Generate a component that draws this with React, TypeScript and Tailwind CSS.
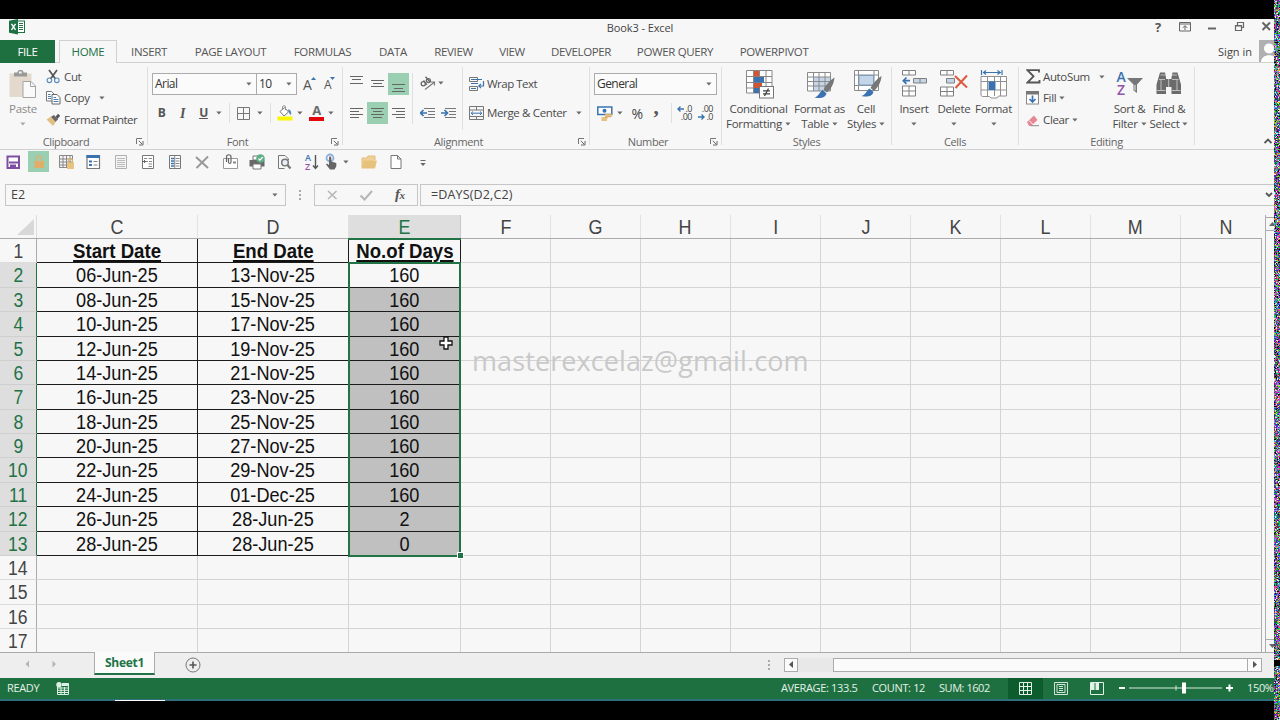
import type { ReactNode } from "react";
import clsx from "clsx";

const BLUE = "#3b73b0";

const Arrow = ({ className, light }: { className?: string; light?: boolean }) => (
  <svg width="6" height="4" viewBox="0 0 6 4" className={clsx("shrink-0", className)}>
    <path d="M0.3 0.4h5.2L2.9 3.4z" fill={light ? "#aaa" : "#6a6a6a"} />
  </svg>
);

const Launcher = () => (
  <svg width="8" height="8" viewBox="0 0 8 8" className="shrink-0">
    <path d="M0.5 6V0.5H6" fill="none" stroke="#777" />
    <path d="M2.8 2.8L6 6M7 3v4H3" fill="none" stroke="#666" />
  </svg>
);

const Sep = ({ className }: { className?: string }) => (
  <div className={clsx("w-px shrink-0 bg-[#e0e0e0]", className)} />
);

/* ---------- clipboard ---------- */

const PasteIcon = () => (
  <svg width="28" height="30" viewBox="0 0 28 30" className="shrink-0">
    <rect x="0.5" y="3.5" width="22" height="23.5" fill="#e3d9cd" />
    <path d="M5 2.500h3.500c0-3.500 6-3.500 6 0H18v4H5z" fill="#999" />
    <rect x="10" y="1.500" width="2.6" height="2" fill="#f7f7f7" />
    <path d="M14 11.500h8l4.5 4.500V27.500H14z" fill="#fafafa" stroke="#a3a3a3" />
    <path d="M21.500 11.500v5h5" fill="none" stroke="#a3a3a3" />
  </svg>
);

const CutIcon = () => (
  <svg width="15" height="15" viewBox="0 0 15 15" className="shrink-0">
    <path d="M3 1l6.500 9M11 1L4.500 10" stroke="#555" strokeWidth="1.7" fill="none" />
    <circle cx="3.400" cy="11.300" r="2.300" fill="none" stroke="#5b8dbb" strokeWidth="1.100" />
    <circle cx="10.800" cy="11.300" r="2.300" fill="none" stroke="#5b8dbb" strokeWidth="1.100" />
  </svg>
);

const CopyIcon = () => (
  <svg width="15" height="14" viewBox="0 0 15 14" className="shrink-0">
    <path d="M0.500 0.500h5l2.500 2.500v7H0.500z" fill="#fff" stroke="#777" />
    <path d="M2 3.500h2.500M2 5.500h3M2 7.500h3" stroke={BLUE} strokeWidth="0.900" />
    <path d="M6 3.500h5l3 3v6.500H6z" fill="#fff" stroke="#666" />
    <path d="M7.500 6.500h2.500M7.500 8.500h5M7.500 10.500h5" stroke={BLUE} strokeWidth="0.900" />
  </svg>
);

const PainterIcon = () => (
  <svg width="15" height="14" viewBox="0 0 15 14" className="shrink-0">
    <path d="M0.500 6.500L5 3.500l5 5-3 4.500z" fill="#e3bf85" />
    <path d="M5 3.800l3-1.800 4 4.500-2.500 2.300z" fill="#666" />
    <path d="M9.500 3.800L12 0.800l2.200 2-2.700 3.200z" fill="#555" />
  </svg>
);

/* ---------- font ---------- */

const GrowFont = ({ down }: { down?: boolean }) => (
  <div className="flex h-5 w-[14px] shrink-0 items-end">
    <span className={clsx("leading-[18px] text-[#555]", down ? "text-[12px]" : "text-[14px]")}>A</span>
    <svg width="5" height="3" viewBox="0 0 5 3" className="-ml-px mb-[14px] shrink-0">
      <path d={down ? "M0 0h5L2.500 3z" : "M0 3h5L2.500 0z"} fill={BLUE} />
    </svg>
  </div>
);

const BordersIcon = () => (
  <svg width="13" height="13" viewBox="0 0 13 13" className="shrink-0">
    <path d="M0.500 0.500h12v12H0.500zM6.500 0.500v12M0.500 6.500h12" fill="none" stroke="#777" />
  </svg>
);

const FillIcon = () => (
  <svg width="16" height="16" viewBox="0 0 16 16" className="shrink-0">
    <path d="M3 6.500L7.500 2.500l4 4.500-4.500 4z" fill="#fff" stroke="#777" />
    <path d="M5.500 5V2.200c0-2 3-2 3 0V5" fill="none" stroke="#888" />
    <path d="M11 4.500c3 0 3.500 2.500 3 5.500-1.500-1-2.500-2.500-3-5.500z" fill="#5b84b5" />
    <rect x="0.500" y="11.500" width="15" height="4" fill="#fbf507" />
  </svg>
);

const FontColorIcon = () => (
  <div className="flex h-[18px] w-[15px] shrink-0 flex-col items-center">
    <span className="text-[13px] font-bold leading-[13px] text-[#6a6a6a]">A</span>
    <div className="h-1 w-[15px] bg-[#e3060c]" />
  </div>
);

/* ---------- alignment ---------- */

const Lines = ({ rows }: { rows: number[][] }) => (
  <svg width="14" height="14" viewBox="0 0 14 14" className="shrink-0">
    {rows.map(([x, y, w]) => (
      <rect key={y} x={x} y={y} width={w} height="1" fill="#666" />
    ))}
  </svg>
);

const OrientIcon = () => (
  <svg width="16" height="15" viewBox="0 0 16 15" className="shrink-0">
    <circle cx="3.300" cy="7.800" r="2.100" fill="none" stroke="#666" strokeWidth="1.300" />
    <path d="M3.500 4.500L7 8.800M5.500 0.800l4.800 5.500" stroke="#666" strokeWidth="1.300" />
    <circle cx="8.400" cy="4.600" r="2" fill="none" stroke="#666" strokeWidth="1.300" />
    <path d="M5 13.500L14 6.500M14.500 9.500V6h-3.500" fill="none" stroke="#777" strokeWidth="1.100" />
  </svg>
);

const IndentIcon = ({ right }: { right?: boolean }) => (
  <svg width="15" height="12" viewBox="0 0 15 12" className="shrink-0">
    <path d="M4 1.500h11M8 4.500h7M8 7.500h7M4 10.500h11" stroke="#777" />
    <path d={right ? "M0 6h6M3.500 3l3 3-3 3" : "M1 6h6M3.500 3l-3 3 3 3"} fill="none" stroke={BLUE} strokeWidth="1.700" />
  </svg>
);

const WrapIcon = () => (
  <svg width="16" height="15" viewBox="0 0 16 15" className="shrink-0">
    <path d="M0.500 0.500h8v4h-8zM0.500 9.500h8v4h-8z" fill="none" stroke="#777" />
    <path d="M2 2.500h11M2 6.500h7M2 11.500h5" stroke={BLUE} />
    <path d="M14.500 4v5H10M12 6.800L9.800 9l2.200 2.200" fill="none" stroke={BLUE} strokeWidth="1.200" />
  </svg>
);

const MergeIcon = () => (
  <svg width="16" height="15" viewBox="0 0 16 15" className="shrink-0">
    <path d="M0.500 0.500h14v13h-14zM0.500 4h14M0.500 10.500h14M7.500 0.500V4M7.500 10.500v3" fill="none" stroke="#777" />
    <path d="M2 7.200h11M4 5.500L2.200 7.200 4 9M11 5.500l1.800 1.700L11 9" fill="none" stroke={BLUE} />
  </svg>
);

/* ---------- number ---------- */

const MoneyIcon = () => (
  <svg width="16" height="15" viewBox="0 0 16 15" className="shrink-0">
    <rect x="0.800" y="1" width="14" height="7.500" fill="#fff" stroke={BLUE} strokeWidth="1.500" />
    <circle cx="7.500" cy="4.700" r="2" fill={BLUE} />
    <path d="M8 8.500h7M8 10.500h6.500M4.500 12h6M4.500 14h5.500" stroke="#e0b060" strokeWidth="1.500" />
  </svg>
);

const Decimal = ({ inc }: { inc?: boolean }) => (
  <div className="flex w-[15px] shrink-0 flex-col font-['Open_Sans',sans-serif] text-[9px] leading-[8px] tracking-[-0.5px] text-[#444]">
    <div className="flex h-2 items-center justify-end gap-px">
      {inc && (
        <svg width="7" height="6" viewBox="0 0 7 6"><path d="M1 3h6M3.500 0.500L1 3l2.500 2.500" fill="none" stroke={BLUE} strokeWidth="1.400" /></svg>
      )}
      <span>{inc ? ".0" : ".00"}</span>
    </div>
    <div className="flex h-2 items-center justify-end gap-px">
      {!inc && (
        <svg width="7" height="6" viewBox="0 0 7 6"><path d="M0 3h6M3.500 0.500L6 3 3.500 5.500" fill="none" stroke={BLUE} strokeWidth="1.400" /></svg>
      )}
      <span>{inc ? ".00" : ".0"}</span>
    </div>
  </div>
);

/* ---------- styles ---------- */

const CondIcon = () => (
  <svg width="29" height="30" viewBox="0 0 29 30" className="ml-[3px] shrink-0">
    <path d="M0.500 0.500h25.500v22.500h-25.500zM0.500 6.500h25.500M0.500 12.500h25.500M0.500 18h25.500M7.500 0.500v22.500M13.500 0.500v22.500M20 0.500v22.500" fill="#fff" stroke="#888" />
    <rect x="8" y="1" width="5" height="5.500" fill="#d5532f" />
    <rect x="8" y="7" width="10" height="5.500" fill={BLUE} />
    <rect x="8" y="13" width="8" height="5" fill="#d5532f" />
    <rect x="8" y="18" width="5" height="5" fill={BLUE} />
    <rect x="13.500" y="16.500" width="14" height="11.500" fill="#fff" stroke="#777" />
    <path d="M17 20.800h7M17 23.800h7M22.500 18.500l-4 7.500" stroke="#444" strokeWidth="1.300" />
  </svg>
);

const Brush = () => (
  <>
    <path d="M27.500 6.500c-5 3-9 8-11 12l3.500 3c4-3.500 7-9 7.500-15z" fill="#777" />
    <path d="M15.500 19l4 3.500c-1 4-6 5.500-12 4 4-1 5-5.500 8-7.500z" fill={BLUE} />
  </>
);

const TableIcon = () => (
  <svg width="28" height="30" viewBox="0 0 28 30" className="ml-[2px] shrink-0">
    <rect x="0.500" y="2.500" width="23" height="18" fill="#fff" />
    <rect x="6" y="7" width="17.500" height="14" fill="#c5d5e8" />
    <path d="M0.500 2.500h23v18.500h-23zM0.500 7h23M0.500 11.500h23M0.500 16h23M6.500 2.500V21M12 2.500V21M18 2.500V21" fill="none" stroke="#8a8a8a" />
    <g transform="translate(0 1)">
      <Brush />
    </g>
  </svg>
);

const CellStylesIcon = () => (
  <svg width="28" height="30" viewBox="0 0 28 30" className="ml-[4px] shrink-0">
    <path d="M0.500 0.500h24v20h-24zM0.500 5h24M0.500 15.500h24M4.500 0.500v20M20 0.500v20" fill="#fff" stroke="#8a8a8a" />
    <rect x="5" y="5.500" width="14.500" height="9.500" fill="#c5d5e8" stroke="#7f9fc2" />
    <g transform="translate(0 -0.500)">
      <Brush />
    </g>
  </svg>
);

/* ---------- cells ---------- */

const InsertIcon = () => (
  <svg width="27" height="30" viewBox="0 0 27 30" className="shrink-0">
    <path d="M1.500 0.500h13v4.500h-13zM8 0.500V5M1.500 16h13v10h-13zM1.500 21h13M8 16v10" fill="#fff" stroke="#808080" />
    <path d="M12.500 8.500h13v4.500h-13zM19 8.500V13" fill="#c5d5e8" stroke="#808080" />
    <path d="M2.500 10.700H9M5.500 7.500L2.300 10.700l3.200 3.200" fill="none" stroke={BLUE} strokeWidth="1.700" />
  </svg>
);

const DeleteIcon = () => (
  <svg width="28" height="30" viewBox="0 0 28 30" className="shrink-0">
    <path d="M0.500 0.500h13v4.500h-13zM7 0.500V5M0.500 17h13v9h-13zM0.500 21.500h13M7 17v9" fill="#fff" stroke="#808080" />
    <path d="M6.500 8.500h8V13h-8z" fill="#c5d5e8" stroke="#808080" />
    <path d="M15 6l12 11.500M27 5.500L15.500 18" stroke="#dd5a3c" strokeWidth="2" />
  </svg>
);

const FormatIcon = () => (
  <svg width="28" height="30" viewBox="0 0 28 30" className="shrink-0">
    <path d="M1.500 0v5M22 0v5M3 2.500h18M6 0.500l-2.500 2L6 4.500M17.500 0.500l2.500 2-2.500 2" fill="none" stroke={BLUE} strokeWidth="1.200" />
    <path d="M1 6.500h25.500v19.500H18.500l-1.500 2h-6l-1.500-1.500h-7l-1.500-1zM1 11.500h25.500M1 20h25.500M7.500 6.500v19.500M14.500 6.500v5M14.500 20v6M20.500 6.500v19.500" fill="#fff" stroke="#909090" />
    <rect x="8.500" y="11.500" width="7" height="8.500" fill={BLUE} />
  </svg>
);

/* ---------- editing ---------- */

const SumIcon = () => (
  <svg width="15" height="15" viewBox="0 0 15 15" className="shrink-0">
    <path d="M13 3.500V1.200H1.500L7.500 7.300 1.500 13.500H13.500V11" fill="none" stroke="#555" strokeWidth="1.800" />
  </svg>
);

const FillDownIcon = () => (
  <svg width="14" height="14" viewBox="0 0 14 14" className="shrink-0">
    <rect x="0.500" y="0.500" width="12" height="12.500" fill="#fff" stroke="#888" />
    <rect x="0" y="0" width="13" height="3.500" fill="#777" />
    <path d="M6.500 4.500v6.500M3.500 8l3 3 3-3" fill="none" stroke={BLUE} strokeWidth="1.700" />
  </svg>
);

const EraserIcon = () => (
  <svg width="14" height="13" viewBox="0 0 14 13" className="shrink-0">
    <path d="M1 8l7-6.500 3.500 4.500-6.500 6H3z" fill="#e58794" />
    <path d="M3 6.500l4 4" stroke="#f7f7f7" />
    <path d="M5 11.700h8" stroke="#888" />
  </svg>
);

const SortIcon = () => (
  <div className="flex h-[30px] w-[28px] shrink-0">
    <div className="flex w-[11px] flex-col text-center text-[14px] font-semibold leading-[13px]">
      <span className="text-[#3b73b0]">A</span>
      <span className="text-[#9055a8]">Z</span>
    </div>
    <svg width="17" height="30" viewBox="0 0 17 30" className="shrink-0">
      <path d="M0 8h16L10 14.500V23L6.500 20.500V14.500z" fill="#777" />
      <path d="M8 15v5.500" stroke="#eee" />
    </svg>
  </div>
);

const FindIcon = () => (
  <svg width="26" height="30" viewBox="0 0 26 30" className="shrink-0">
    <path d="M4 2.500h5l1 5v16.500H0.500V14.500zM21.500 2.500h-5l-1 5v16.500H25V14.500z" fill="#6b6b6b" />
    <rect x="9" y="9" width="7.500" height="8" fill="#6b6b6b" />
    <path d="M4.500 5h5M16 5h5M3 9.500h6M16 9.500h6.500M1 20.500h8.500M16 20.500h8.500M12.700 9v8M5 10v10M21 10v10" stroke="#c8c8c8" strokeWidth="0.900" />
  </svg>
);

/* ---------- ribbon building blocks ---------- */

interface GroupProps {
  label: string;
  className: string;
  launcher?: boolean;
  children: ReactNode;
}

const Group = ({ label, className, launcher, children }: GroupProps) => (
  <div className={clsx("flex h-[86px] shrink-0", className)}>
    <div className="flex min-w-0 flex-1 flex-col">
      <div className="flex h-[71px]">{children}</div>
      <div className="flex h-[15px] items-center">
        <div className="flex-1 text-center text-[11px] leading-[15px] text-[#666]">{label}</div>
        {launcher && (
          <div className="w-[15px] shrink-0 pl-1">
            <Launcher />
          </div>
        )}
      </div>
    </div>
    <Sep className="my-1" />
  </div>
);

interface BigButtonProps {
  icon: ReactNode;
  lines: string[];
  className: string;
  muted?: boolean;
}

const BigButton = ({ icon, lines, className, muted }: BigButtonProps) => (
  <div
    className={clsx(
      "flex shrink-0 flex-col items-center whitespace-nowrap pt-[7px] text-[11.5px] leading-[15px] tracking-[-0.3px]",
      muted ? "text-[#8c8c8c]" : "text-[#4a4a4a]",
      className
    )}
  >
    {icon}
    <div className="mt-px flex h-[15px] justify-center">{lines[0]}</div>
    <div className="flex h-[15px] items-center justify-center">
      {lines[1] && <span className="mr-[3px]">{lines[1]}</span>}
      <Arrow light={muted} />
    </div>
  </div>
);

const Combo = ({ text, className }: { text: string; className: string }) => (
  <div className={clsx("flex h-[22px] shrink-0 items-center border border-[#ababab] bg-[#fbfbfb] pl-[2px] text-[12px] tracking-[-0.55px] text-[#333]", className)}>
    <span className="flex-1">{text}</span>
    <Arrow className="mr-1" />
  </div>
);

const tabs = [
  { name: "INSERT", w: "w-[64px]" },
  { name: "PAGE LAYOUT", w: "w-[99px]" },
  { name: "FORMULAS", w: "w-[85px]" },
  { name: "DATA", w: "w-[56px]" },
  { name: "REVIEW", w: "w-[65px]" },
  { name: "VIEW", w: "w-[52px]" },
  { name: "DEVELOPER", w: "w-[86px]" },
  { name: "POWER QUERY", w: "w-[102px]" },
  { name: "POWERPIVOT", w: "w-[96px]" },
];

const TitleBar = () => (
  <div className="flex h-[21px] shrink-0 items-start">
    <svg width="16" height="16" viewBox="0 0 16 16" className="ml-[9px] shrink-0">
      <rect x="8" y="2" width="7.500" height="11.500" fill="#fff" stroke="#217346" />
      <path d="M10 4.500h4M10 6.500h4M10 8.500h4M10 10.500h4" stroke="#217346" />
      <path d="M0 1.700L9 0v15.500L0 13.800z" fill="#1e7145" />
      <path d="M2.500 4.800l4 6M6.500 4.800l-4 6" stroke="#fff" strokeWidth="1.400" />
    </svg>
    <div className="w-[1128px] pl-[102px] pt-px text-center text-[11px] leading-4 tracking-[-0.1px] text-[#444]">
      <span className="ml-[7px]">Book3 - Excel</span>
    </div>
    <span className="w-[12px] shrink-0 text-center text-[13px] font-bold leading-4 text-[#555] ml-[-1px] translate-x-[7px]">?</span>
    <svg width="102" height="16" viewBox="0 0 102 16" className="ml-[21px] shrink-0" fill="none" stroke="#666">
      <path d="M1.500 3.500h11v8.500h-11zM1.500 5h11M7 11V7M4.800 8.800L7 6.600l2.200 2.200" />
      <path d="M30 9.500h8" strokeWidth="2" />
      <path d="M57.500 6.500h6v5h-6zM59.500 6V3.500h6v5H64M57.500 7h6" strokeWidth="1.200" />
      <path d="M84.500 3.500l7.500 7.500M92 3.500L84.500 11" strokeWidth="2" />
    </svg>
  </div>
);

const TabBar = () => (
  <div className="flex h-[23px] shrink-0 text-[11.500px] leading-[23px] tracking-[-0.35px] text-[#555]">
    <div className="w-[55px] shrink-0 bg-[#1f7040] text-center text-white">FILE</div>
    <div className="w-1 border-b border-[#d0d0d0]" />
    <div className="w-[58px] shrink-0 border border-b-0 border-[#d0d0d0] text-center leading-[21px] text-[#217346]">HOME</div>
    <div className="flex flex-1 items-center border-b border-[#d0d0d0]">
      {tabs.map((t) => (
        <div key={t.name} className={clsx("shrink-0 whitespace-nowrap text-center", t.w)}>
          {t.name}
        </div>
      ))}
      <div className="flex-1" />
      <span className="text-[11px] tracking-[0px] text-[#444]">Sign in</span>
      <svg width="21" height="22" viewBox="0 0 21 22" className="ml-[7px] shrink-0">
        <rect width="21" height="22" fill="#b0b0b0" />
        <circle cx="10" cy="8.500" r="5" fill="#fff" />
        <path d="M2 22c0-9 16-9 16 0z" fill="#fff" />
      </svg>
    </div>
  </div>
);

const Ribbon = () => (
  <div className="flex h-[87px] shrink-0 border-b border-[#d0d0d0] text-[11.500px] tracking-[-0.35px] text-[#4a4a4a]">
    <Group label="Clipboard" className="w-[148px]" launcher>
      <BigButton muted icon={<PasteIcon />} lines={["Paste"]} className="w-[46px]" />
      <div className="flex flex-col whitespace-nowrap pt-[3px]">
        <div className="flex h-[21px] items-center gap-[3px]"><CutIcon />Cut</div>
        <div className="flex h-[22px] items-center gap-[3px]"><CopyIcon />Copy<Arrow className="ml-[6px]" /></div>
        <div className="flex h-[22px] items-center gap-[3px] tracking-[-0.5px]"><PainterIcon />Format Painter</div>
      </div>
    </Group>

    <Group label="Font" className="w-[195px]" launcher>
      <div className="flex flex-col pl-1 pt-[10px]">
        <div className="flex h-[22px] items-center">
          <Combo text="Arial" className="w-[105px]" />
          <Combo text="10" className="-ml-px w-[41px]" />
          <div className="ml-[6px] flex gap-[7px]">
            <GrowFont />
            <GrowFont down />
          </div>
        </div>
        <div className="mt-[8px] flex h-[20px] items-center text-[12px] text-[#555]">
          <span className="ml-[1px] w-[17px] text-center font-bold">B</span>
          <span className="ml-1 w-[17px] text-center font-['Liberation_Serif',serif] text-[14px] font-bold italic">I</span>
          <span className="ml-1 w-[17px] text-center font-bold underline">U</span>
          <Arrow className="ml-[4px]" />
          <Sep className="ml-[7px] h-5" />
          <div className="ml-[7px]"><BordersIcon /></div>
          <Arrow className="ml-[7px]" />
          <Sep className="ml-[7px] h-5" />
          <div className="ml-[6px]"><FillIcon /></div>
          <Arrow className="ml-[4px]" />
          <div className="ml-[6px]"><FontColorIcon /></div>
          <Arrow className="ml-[4px]" />
        </div>
      </div>
    </Group>

    <Group label="Alignment" className="w-[247px]" launcher>
      <div className="flex w-[69px] flex-col pl-[3px] pt-[10px]">
        <div className="flex h-[22px] items-center">
          <div className="flex h-[22px] w-[21px] items-start justify-center pt-[2px]"><Lines rows={[[0, 1, 13], [2, 4, 9], [0, 8, 13]]} /></div>
          <div className="flex h-[22px] w-[21px] items-center justify-center"><Lines rows={[[0, 3, 13], [2, 6, 9], [0, 9, 13]]} /></div>
          <div className="flex h-[22px] w-[21px] items-end justify-center bg-[#9bcfb1] pb-[2px]"><Lines rows={[[0, 5, 13], [2, 9, 9], [0, 12, 13]]} /></div>
        </div>
        <div className="mt-[7px] flex h-[22px] items-center">
          <div className="flex w-[21px] justify-center"><Lines rows={[[0, 2, 13], [0, 5, 9], [0, 8, 13], [0, 11, 9]]} /></div>
          <div className="flex h-[22px] w-[21px] items-center justify-center bg-[#9bcfb1]"><Lines rows={[[0, 2, 13], [2, 5, 9], [0, 8, 13], [2, 11, 9]]} /></div>
          <div className="flex w-[21px] justify-center"><Lines rows={[[0, 2, 13], [4, 5, 9], [0, 8, 13], [4, 11, 9]]} /></div>
        </div>
      </div>
      <Sep className="my-[10px]" />
      <div className="flex w-[49px] flex-col pl-[7px] pt-[10px]">
        <div className="flex h-[20px] items-center"><OrientIcon /><Arrow className="ml-[2px]" /></div>
        <div className="mt-[10px] flex h-[20px] items-center gap-[6px]"><IndentIcon /><IndentIcon right /></div>
      </div>
      <Sep className="my-[4px]" />
      <div className="flex flex-col whitespace-nowrap pl-[6px] pt-[10px]">
        <div className="flex h-[22px] items-center gap-[2px] tracking-[-0.5px]"><WrapIcon />Wrap Text</div>
        <div className="mt-[7px] flex h-[22px] items-center gap-[2px]"><MergeIcon />Merge &amp; Center<Arrow className="ml-[7px]" /></div>
      </div>
    </Group>

    <Group label="Number" className="w-[132px]" launcher>
      <div className="flex flex-col pl-1 pt-[10px]">
        <Combo text="General" className="w-[123px]" />
        <div className="mt-[8px] flex h-[20px] items-center">
          <div className="ml-[3px]"><MoneyIcon /></div>
          <Arrow className="ml-[4px]" />
          <span className="ml-[7px] w-[14px] text-center text-[14px] text-[#444]">%</span>
          <span className="ml-[5px] w-[14px] pb-[10px] text-center font-['Liberation_Serif',serif] text-[21px] font-bold text-[#555]">,</span>
          <Sep className="ml-[8px] h-5" />
          <div className="ml-[5px]"><Decimal inc /></div>
          <div className="ml-[6px]"><Decimal /></div>
        </div>
      </div>
    </Group>

    <Group label="Styles" className="w-[170px]">
      <BigButton icon={<CondIcon />} lines={["Conditional", "Formatting"]} className="w-[73px]" />
      <BigButton icon={<TableIcon />} lines={["Format as", "Table"]} className="w-[49px]" />
      <BigButton icon={<CellStylesIcon />} lines={["Cell", "Styles"]} className="w-[44px]" />
    </Group>

    <Group label="Cells" className="w-[127px]">
      <BigButton icon={<InsertIcon />} lines={["Insert"]} className="w-[44px]" />
      <BigButton icon={<DeleteIcon />} lines={["Delete"]} className="w-[36px]" />
      <BigButton icon={<FormatIcon />} lines={["Format"]} className="w-[43px]" />
    </Group>

    <Group label="Editing" className="w-[176px]">
      <div className="flex w-[90px] flex-col whitespace-nowrap pl-[7px] pt-[3px]">
        <div className="flex h-[21px] items-center gap-[2px]"><SumIcon />AutoSum<Arrow className="ml-[7px]" /></div>
        <div className="flex h-[22px] items-center gap-[3px]"><FillDownIcon />Fill<Arrow /></div>
        <div className="flex h-[22px] items-center gap-[3px]"><EraserIcon />Clear<Arrow /></div>
      </div>
      <BigButton icon={<SortIcon />} lines={["Sort &", "Filter"]} className="w-[41px]" />
      <BigButton icon={<FindIcon />} lines={["Find &", "Select"]} className="w-[38px]" />
    </Group>

    <div className="flex flex-1 items-end justify-end pb-[5px] pr-[8px]">
      <svg width="8" height="6" viewBox="0 0 8 6"><path d="M0.500 5L4 1.500 7.500 5" fill="none" stroke="#555" strokeWidth="1.800" /></svg>
    </div>
  </div>
);

/* ---------- quick access toolbar ---------- */

const quickIcons: ReactNode[] = [
  <g key="save">
    <path d="M2.500 2.500h11.500v11.500h-11.500z" fill="#fff" stroke="#7d4fa3" strokeWidth="2" />
    <path d="M4 8.500h9" stroke="#7d4fa3" strokeWidth="2" />
    <path d="M5 14v-3.500h6V14" fill="#7d4fa3" />
  </g>,
  <g key="lock">
    <path d="M5.500 7V4.500c0-3 5-3 5 0V7" fill="none" stroke="#d6b47b" strokeWidth="1.500" />
    <rect x="3.500" y="7" width="9.500" height="7" fill="#e0ae69" />
  </g>,
  <g key="protect">
    <path d="M1.500 1.500h13v12h-13zM1.500 5h13M1.500 8h13M1.500 11h13M5 1.500v12M8.500 1.500v12M12 1.500v12" fill="none" stroke="#888" />
    <rect x="9" y="8.500" width="7" height="6.500" fill="#e6c47f" />
    <path d="M10.500 8.500V6.500c0-2 4-2 4 0v2" fill="none" stroke="#e0b868" strokeWidth="1.300" />
  </g>,
  <g key="options">
    <path d="M2 1.500h12.500v13H2z" fill="#fff" stroke="#777" strokeWidth="1.200" />
    <path d="M1.500 2.500h13.500" stroke={BLUE} strokeWidth="3" />
    <path d="M4 7.500h3M4 11h3" stroke={BLUE} strokeWidth="2" />
    <path d="M8.500 7.500h4M8.500 11h4" stroke="#888" />
  </g>,
  <g key="list1">
    <path d="M2.500 1.500h11v13h-11z" fill="#f4f4f4" stroke="#b0b0b0" />
    <path d="M4 4.500h8M4 6.500h8M4 8.500h8M4 10.500h8M4 12.500h8" stroke="#bbb" />
  </g>,
  <g key="list2">
    <path d="M2.500 1.500h11v13h-11z" fill="#fff" stroke="#777" />
    <path d="M4 4.500h3M8.500 4.500h3.500M6 7.500h2M9 7.500h3M8.500 10h3.500M8.500 12.500h3.500" stroke="#888" />
    <path d="M2 7.500h4M4.500 6v3" stroke="#666" />
  </g>,
  <g key="list3">
    <path d="M2.500 1.500h11v13h-11z" fill="#fff" stroke="#777" />
    <path d="M4 4.500h3M4 7h3M4 9.500h3M4 12h3" stroke={BLUE} strokeWidth="1.300" />
    <path d="M8.500 4.500h4M8.500 7h4M8.500 9.500h4M8.500 12h4M7.700 2v12" stroke="#888" />
  </g>,
  <path key="x" d="M2 3l12 11M14 2.500L2.500 14" stroke="#999" strokeWidth="2" />,
  <g key="mail">
    <path d="M1.500 4.500h14v10h-14z" fill="#fff" stroke="#999" />
    <path d="M4.500 8V3c0-3 4.500-3 4.500 0v5c0 2-2.500 2-2.500 0V4" fill="none" stroke="#666" strokeWidth="1.200" />
    <path d="M11 7.500h3v2h-3z" fill="#888" />
  </g>,
  <g key="print">
    <path d="M4 2h7v4H4z" fill="#fff" stroke="#777" />
    <path d="M0.500 6h15v6.500h-15z" fill="#686868" />
    <path d="M4 10h8v5H4z" fill="#fff" stroke="#777" />
    <circle cx="11.500" cy="4.500" r="4.300" fill="#5faf86" />
    <path d="M9.500 4.500l1.500 1.700 2.800-3.200" fill="none" stroke="#fff" strokeWidth="1.200" />
  </g>,
  <g key="preview" fill="none" stroke="#777">
    <path d="M12.500 6V5L9 1.500H2.500v13h6" />
    <circle cx="9" cy="8.500" r="3.300" strokeWidth="1.500" fill="#e8eef5" />
    <path d="M11.500 11l3 3.500" strokeWidth="2.200" />
  </g>,
];

const SortAzSmall = () => (
  <div className="flex h-[18px] w-[14px] shrink-0">
    <div className="flex w-[7px] flex-col text-[9px] font-semibold leading-[9px]">
      <span className="text-[#3b73b0]">A</span>
      <span className="text-[#9055a8]">Z</span>
    </div>
    <svg width="7" height="17" viewBox="0 0 7 17"><path d="M3.500 2v13M1 12.500L3.500 15.500 6 12.500" fill="none" stroke="#555" strokeWidth="1.400" /></svg>
  </div>
);

const QuickBar = () => (
  <div className="flex h-[23px] shrink-0 items-center">
    {quickIcons.map((icon, i) => (
      <div key={i} className={clsx("flex shrink-0 justify-center", i === 0 ? "w-[25px]" : "w-[27.300px]")}>
        <div className={clsx("flex h-[21px] w-[21px] items-center justify-center", i === 1 && "bg-[#9bcfb1]")}>
          <svg width="16" height="16" viewBox="0 0 16 16" className="shrink-0">{icon}</svg>
        </div>
      </div>
    ))}
    <div className="ml-[7px]"><SortAzSmall /></div>
    <svg width="14" height="17" viewBox="0 0 14 17" className="ml-[6px] shrink-0">
      <circle cx="5" cy="5" r="3.500" fill="none" stroke="#8fb0d8" strokeWidth="1.800" />
      <path d="M4 4.500c0-1.500 2.300-1.500 2.300 0v4l5 1.500v3.500L9.500 16.500H5L1 11.500l1-1 2 1.500z" fill="#666" />
    </svg>
    <Arrow className="ml-[4px]" />
    <svg width="17" height="14" viewBox="0 0 17 14" className="ml-[12px] shrink-0">
      <path d="M1 12.500V3h5l1-2h7v4" fill="#edd09a" stroke="#e3bd76" />
      <path d="M0.500 13.500L3 5.500h13L14 13.500z" fill="#e7c27d" />
    </svg>
    <svg width="12" height="14" viewBox="0 0 12 14" className="ml-[12px] shrink-0">
      <path d="M1 0.500h6.500l3.500 3.500v9.500H1zM7.500 0.500V4H11" fill="#fff" stroke="#777" />
    </svg>
    <svg width="6" height="7" viewBox="0 0 6 7" className="ml-[18px] mt-1 shrink-0">
      <path d="M0.500 0.500h5" stroke="#666" />
      <path d="M0.300 3h5.400L3 6z" fill="#666" />
    </svg>
  </div>
);

const FormulaBar = () => (
  <div className="flex h-[22px] shrink-0 pl-[5px] text-[12.500px] leading-[18px] text-[#444]">
    <div className="flex w-[281px] shrink-0 items-center border border-[#c6c6c6] pb-px pl-[5px]">
      <span className="flex-1">E2</span>
      <Arrow className="mr-[7px]" />
    </div>
    <div className="flex w-[28px] shrink-0 flex-col items-center justify-center gap-[2px]">
      <div className="h-[2px] w-[2px] bg-[#aaa]" />
      <div className="h-[2px] w-[2px] bg-[#aaa]" />
      <div className="h-[2px] w-[2px] bg-[#aaa]" />
    </div>
    <div className="flex w-[104px] shrink-0 items-center border border-[#c6c6c6] pb-px">
      <svg width="50" height="14" viewBox="0 0 50 14" className="ml-[12px] shrink-0" fill="none" stroke="#b5b5b5">
        <path d="M1 3l8.500 8M9.500 3L1 11" strokeWidth="1.500" />
        <path d="M33.500 7.500l4 4L45 3" strokeWidth="2" />
      </svg>
      <span className="ml-[18px] font-['Liberation_Serif',serif] text-[15px] font-bold italic tracking-[-0.5px] text-[#555]">
        f<span className="text-[11px]">x</span>
      </span>
    </div>
    <div className="ml-[2px] flex flex-1 items-center border border-r-0 border-[#c6c6c6] pb-px pl-[10px]">
      <span className="flex-1 tracking-[0.150px]">=DAYS(D2,C2)</span>
      <svg width="8" height="6" viewBox="0 0 8 6" className="mr-[7px]"><path d="M1 1l3 3 3-3" fill="none" stroke="#555" strokeWidth="1.800" /></svg>
    </div>
  </div>
);

/* ---------- sheet ---------- */

const columns = [
  { name: "C", w: "w-[161px]" },
  { name: "D", w: "w-[151px]" },
  { name: "E", w: "w-[112px]" },
  { name: "F", w: "w-[90px]" },
  { name: "G", w: "w-[90px]" },
  { name: "H", w: "w-[90px]" },
  { name: "I", w: "w-[90px]" },
  { name: "J", w: "w-[90px]" },
  { name: "K", w: "w-[90px]" },
  { name: "L", w: "w-[90px]" },
  { name: "M", w: "w-[90px]" },
  { name: "N", w: "w-[81px]" },
];

const data = [
  ["Start Date", "End Date", "No.of Days"],
  ["06-Jun-25", "13-Nov-25", "160"],
  ["08-Jun-25", "15-Nov-25", "160"],
  ["10-Jun-25", "17-Nov-25", "160"],
  ["12-Jun-25", "19-Nov-25", "160"],
  ["14-Jun-25", "21-Nov-25", "160"],
  ["16-Jun-25", "23-Nov-25", "160"],
  ["18-Jun-25", "25-Nov-25", "160"],
  ["20-Jun-25", "27-Nov-25", "160"],
  ["22-Jun-25", "29-Nov-25", "160"],
  ["24-Jun-25", "01-Dec-25", "160"],
  ["26-Jun-25", "28-Jun-25", "2"],
  ["28-Jun-25", "28-Jun-25", "0"],
];

const rowNumbers = Array.from({ length: 17 }, (_, i) => i + 1);

const Sheet = () => (
  <div className="relative flex h-[437px] shrink-0 overflow-hidden font-['Liberation_Sans',Arial,sans-serif]">
    <div className="flex w-[1262px] shrink-0 flex-col">
      <div className="flex h-6 shrink-0 border-b border-[#ababab] text-[19.500px] leading-6 text-[#444]">
        <div className="flex w-[37px] items-end justify-end border-r border-[#dcdcdc] pb-[3px] pr-[2px]">
          <svg width="17" height="16" viewBox="0 0 17 16"><path d="M17 0v16H0z" fill="#d8d8d8" /></svg>
        </div>
        {columns.map((c) => (
          <div
            key={c.name}
            className={clsx(
              "flex shrink-0 justify-center border-r",
              c.w,
              c.name === "E" ? "border-[#c8c8c8] bg-[#dedede] text-[#217346]" : "border-[#e2e2e2]",
              c.name === "N" && "border-r-0 pl-[9px]"
            )}
          >
            <span className="scale-x-[0.92]">{c.name}</span>
          </div>
        ))}
      </div>
      {rowNumbers.map((n) => {
        const selected = n >= 2 && n <= 13;
        return (
          <div key={n} className="flex h-[24.380px] shrink-0 text-[19.500px] leading-[24px]">
            <div
              className={clsx(
                "flex w-[37px] shrink-0 justify-center border-b border-r",
                selected ? "border-b-[#cfcfcf] border-r-[#217346] bg-[#dedede] text-[#217346]" : "border-b-[#dcdcdc] border-r-[#ababab] text-[#444]"
              )}
            >
              <span className="scale-x-[0.9]">{n}</span>
            </div>
            {columns.map((c, i) => {
              const filled = i < 3 && n <= 13;
              return (
                <div
                  key={c.name}
                  className={clsx(
                    "flex shrink-0 justify-center whitespace-nowrap border-b border-r",
                    c.w,
                    filled ? "border-[#1c1c1c] text-[#111]" : "border-[#d4d4d4]",
                    c.name === "N" && "border-r-[#ababab]",
                    n === 1 && "font-bold underline decoration-2 underline-offset-2",
                    i === 2 && n > 2 && n <= 13 && "bg-[#c0c0c0]"
                  )}
                >
                  {filled && <span className={n === 1 ? "scale-x-[0.955]" : "scale-x-[0.93]"}>{data[n - 1][i]}</span>}
                </div>
              );
            })}
          </div>
        );
      })}
    </div>

    {/* selection frame with its fill handle */}
    <div className="absolute left-[348px] top-[23px] h-[2px] w-[113px] bg-[#217346]" />
    <div className="absolute left-[348px] top-[47px] h-[295px] w-[113px] border-2 border-[#217346]" />
    <div className="absolute left-[457px] top-[337px] h-[7px] w-[7px] border border-white bg-[#217346]" />

    <svg width="16" height="16" viewBox="0 0 16 16" className="absolute left-[438px] top-[120px]">
      <path d="M6 2h4v4h4v4h-4v4H6v-4H2V6h4z" fill="#fff" stroke="#111" strokeWidth="1.300" />
    </svg>
    <div className="absolute left-[472px] top-[128px] whitespace-nowrap font-['Open_Sans',sans-serif] text-[27px] leading-[36px] tracking-[0.100px] text-[#c9c9c9]">
      masterexcelaz@gmail.com
    </div>

    <div className="ml-[3px] flex flex-1 flex-col border-l border-[#ababab]">
      <div className="mt-[2px] flex h-[14px] items-center border-y border-[#ababab] pl-[3px]">
        <svg width="7" height="4" viewBox="0 0 7 4"><path d="M0 4h7L3.500 0z" fill="#666" /></svg>
      </div>
      <div className="flex-1" />
      <div className="flex h-[13px] items-center border-t border-[#ababab] pl-[3px]">
        <svg width="7" height="4" viewBox="0 0 7 4"><path d="M0 0h7L3.500 4z" fill="#666" /></svg>
      </div>
    </div>
  </div>
);

const SheetTabs = () => (
  <div className="flex h-[26px] shrink-0 bg-[#eeeeee]">
    <div className="flex w-[94px] items-center border-t border-[#ababab] pb-[3px] pl-[25px]">
      <svg width="32" height="8" viewBox="0 0 32 8"><path d="M4 0.500v7L0.500 4zM27.500 0.500v7L31 4z" fill="#b5b5b5" /></svg>
    </div>
    <div className="flex h-[23px] w-[61px] items-center justify-center border-x border-b-2 border-[#ababab] border-b-[#217346] bg-[#fbfbfb] pt-px text-[12px] font-bold tracking-[-0.3px] text-[#217346]">
      Sheet1
    </div>
    <div className="flex flex-1 items-center border-t border-[#ababab] pb-[2px]">
      <svg width="16" height="16" viewBox="0 0 16 16" className="ml-[30px] shrink-0" fill="none">
        <circle cx="8" cy="8" r="7" stroke="#777" />
        <path d="M8 4.500v7M4.500 8h7" stroke="#555" strokeWidth="1.600" />
      </svg>
      <div className="flex-1" />
      <div className="flex flex-col gap-[2px]">
        <div className="h-[2px] w-[2px] bg-[#aaa]" />
        <div className="h-[2px] w-[2px] bg-[#aaa]" />
        <div className="h-[2px] w-[2px] bg-[#aaa]" />
      </div>
      <div className="ml-[14px] flex h-[14px] w-[14px] items-center justify-center border border-[#ababab] bg-[#fbfbfb]">
        <svg width="4" height="7" viewBox="0 0 4 7"><path d="M4 0v7L0 3.500z" fill="#555" /></svg>
      </div>
      <div className="h-[14px] w-[35px] bg-[#e8e8e8]" />
      <div className="h-[14px] w-[415px] border border-[#ababab] bg-[#fbfbfb]" />
      <div className="-ml-px mr-[18px] flex h-[14px] w-[15px] items-center justify-center border border-[#ababab] bg-[#fbfbfb]">
        <svg width="4" height="7" viewBox="0 0 4 7"><path d="M0 0v7L4 3.500z" fill="#555" /></svg>
      </div>
    </div>
  </div>
);

const StatusBar = () => (
  <div className="flex h-[21px] shrink-0 items-center bg-[#1f7040] pb-px text-[11px] leading-5 tracking-[-0.35px] text-[#e3f2e9]">
    <span className="w-[56px] pl-[7px]">READY</span>
    <svg width="13" height="13" viewBox="0 0 13 13" className="shrink-0">
      <path d="M1.500 4v8.500h11V1.500H6M2 6h10M2 8.300h10M2 10.500h10M5 5v7M8.500 5v7" fill="none" stroke="#dcefe4" />
      <path d="M6 1.500h6.500V4H6z" fill="#dcefe4" />
      <circle cx="3" cy="2.800" r="2.700" fill="#dcefe4" />
    </svg>
    <div className="flex-1" />
    <span className="w-[91px] whitespace-nowrap">AVERAGE: 133.5</span>
    <span className="w-[67px] whitespace-nowrap">COUNT: 12</span>
    <span className="w-[69px] whitespace-nowrap tracking-[-0.45px]">SUM: 1602</span>
    <div className="-mb-px flex h-[21px] w-[35px] items-center justify-center bg-[#0d5c2e]">
      <svg width="13" height="13" viewBox="0 0 13 13"><path d="M0.500 0.500h12v12H0.500zM0.500 4.500h12M0.500 8.500h12M4.500 0.500v12M8.500 0.500v12" fill="none" stroke="#e3f2e9" /></svg>
    </div>
    <svg width="14" height="13" viewBox="0 0 14 13" className="ml-[11px] shrink-0">
      <path d="M0.500 0.500h13v12H0.500zM3 2.500h8v8H3zM5 4.500h4M5 6.500h4M5 8.500h4" fill="none" stroke="#cfe6d8" />
    </svg>
    <svg width="14" height="13" viewBox="0 0 14 13" className="ml-[22px] shrink-0">
      <path d="M0.500 0.500h13v12H0.500z" fill="none" stroke="#e3f2e9" />
      <path d="M1 1h3.500v7H1zM5.500 1H9v7H5.500z" fill="#e3f2e9" />
    </svg>
    <svg width="116" height="14" viewBox="0 0 116 14" className="ml-[14px] shrink-0">
      <path d="M1 7h6M108 7h7M111.500 3.500v7" stroke="#fff" strokeWidth="2" />
      <path d="M11 7h93M58 4.500v5" stroke="#d5eadd" />
      <rect x="64" y="1.500" width="4" height="11" fill="#fff" />
    </svg>
    <span className="w-[46px] shrink-0 pl-[13px]">150%</span>
  </div>
);

/* ---------- static noise along the right edge ---------- */

const noiseColors = ["#000000", "#d81fd0", "#19c43a", "#2a36d8", "#e8e8e8", "#11b7c4", "#c7c21b", "#7a1f9c", "#3c3c3c", "#e0467a", "#1c6b3a", "#8f8fd9"];

const noisePaths = (() => {
  const paths = noiseColors.map(() => "");
  let seed = 91237;
  for (let y = 0; y < 720; y++) {
    for (let x = 0; x < 6; x++) {
      seed = (seed * 1664525 + 1013904223) % 4294967296;
      // short dropout beside the horizontal scroll bar
      if (y >= 660 && y < 666) continue;
      paths[Math.floor(seed / 65536) % noiseColors.length] += `M${x} ${y}h1v1h-1z`;
    }
  }
  return paths;
})();

const NoiseStrip = () => (
  <svg width="6" height="720" viewBox="0 0 6 720" shapeRendering="crispEdges" className="absolute right-0 top-0">
    <rect width="6" height="720" fill="#000" />
    {noisePaths.map((d, i) => (
      <path key={i} d={d} fill={noiseColors[i]} />
    ))}
  </svg>
);

export default function App() {
  return (
    <div className="relative flex h-[720px] w-[1280px] flex-col overflow-hidden bg-black pt-[19px] font-['Open_Sans',sans-serif]">
      <div className="flex w-full flex-col bg-[#f7f7f7]">
        <TitleBar />
        <TabBar />
        <Ribbon />
        <QuickBar />
        <div className="h-[11px] shrink-0" />
        <FormulaBar />
        <div className="h-[9px] shrink-0" />
        <Sheet />
        <SheetTabs />
        <StatusBar />
        <div className="flex h-[2px] shrink-0 items-end bg-[#2f6f7a]">
          <div className="ml-[115px] h-px w-[50px] bg-white" />
        </div>
      </div>
      <NoiseStrip />
    </div>
  );
}
